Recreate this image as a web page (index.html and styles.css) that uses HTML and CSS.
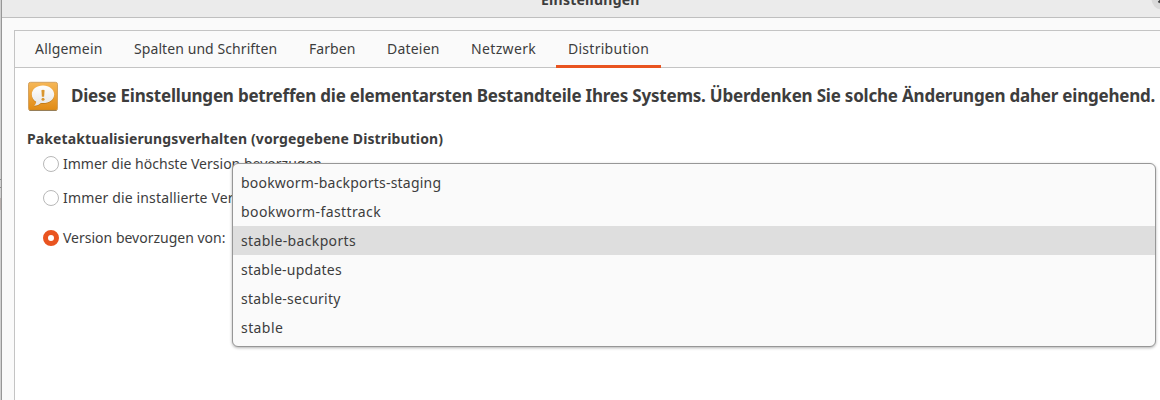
FILE: index.html
```html
<!DOCTYPE html>
<html lang="de">
<head>
<meta charset="utf-8">
<title>Einstellungen</title>
<link rel="stylesheet" href="styles.css">
</head>
<body>
<div class="desktop-edge"><i class="edge-line"></i><i class="edge-line edge-line-second"></i><i class="edge-block"></i></div>
<main class="window">
  <header class="titlebar">
    <span class="title">Einstellungen</span>
    <svg class="close" viewBox="0 0 22 22" width="22" height="22"><circle cx="11" cy="11" r="10.5" fill="#d9d9d9"/><path d="M7.500 7.500l7 7M14.500 7.500l-7 7" stroke="#3d3d3d" stroke-width="2"/></svg>
  </header>
  <section class="notebook">
    <nav class="tabs">
      <span class="tab ls-allgemein">Allgemein</span>
      <span class="tab ls-spalten">Spalten und Schriften</span>
      <span class="tab ls-farben">Farben</span>
      <span class="tab ls-dateien">Dateien</span>
      <span class="tab ls-netzwerk">Netzwerk</span>
      <span class="tab active ls-distribution">Distribution</span>
    </nav>
    <div class="page">
      <div class="warning">
        <svg class="warning-icon" viewBox="0 0 30 30" width="30" height="30">
          <defs>
            <linearGradient id="tile" x2="0" y2="1"><stop offset="0" stop-color="#f6b757"/><stop offset="1" stop-color="#e08a14"/></linearGradient>
            <linearGradient id="bubble" x2="0" y2="1"><stop offset="0" stop-color="#ffffff"/><stop offset="1" stop-color="#e6e6e6"/></linearGradient>
          </defs>
          <rect x=".5" y="1.300" width="29" height="28.2" rx="2" fill="url(#tile)" stroke="#d3a260"/>
          <path d="M1.500 29.400h27" stroke="#8f7a58"/>
          <path d="M15 5.200C8.600 5.200 3.800 9 3.800 14.200c0 3.200 1.700 5.700 4.400 7.300-.2 1.700-.9 2.900-2.200 4 3.200-.1 5.300-1.100 6.900-2.700.7.100 1.400.1 2.100.1 6.400 0 11.200-3.700 11.200-8.700S21.400 5.200 15 5.200z" fill="#8a5200" opacity=".4"/>
          <path d="M15 4.400C8.600 4.400 3.800 8.200 3.800 13.400c0 3.200 1.700 5.700 4.400 7.300-.2 1.700-.9 2.900-2.200 4 3.200-.1 5.300-1.100 6.900-2.700.7.100 1.400.1 2.100.1 6.400 0 11.200-3.700 11.200-8.700S21.400 4.400 15 4.400z" fill="url(#bubble)"/>
          <path d="M13.400 9.200q1.600-.9 3.200 0l-.5 6.500h-2.200z" fill="#d9962f"/><circle cx="15" cy="18.300" r="1.500" fill="#d9962f"/>
        </svg>
        <strong class="warning-text">Diese Einstellungen betreffen die elementarsten Bestandteile Ihres Systems. Überdenken Sie solche Änderungen daher eingehend.</strong>
      </div>
      <h2 class="heading">Paketaktualisierungsverhalten (vorgegebene Distribution)</h2>
      <div class="choices">
        <label class="choice"><span class="radio"></span><span class="ls-highest">Immer die höchste Version bevorzugen</span></label>
        <label class="choice choice-installed"><span class="radio"></span><span class="ls-installed">Immer die installierte Ver</span></label>
        <div class="choice-row">
          <label class="choice"><span class="radio checked"></span><span class="ls-prefer">Version bevorzugen von:</span></label>
        </div>
      </div>
    </div>
  </section>
</main>
<ul class="menu">
  <li class="item ls-staging">bookworm-backports-staging</li>
  <li class="item ls-fasttrack">bookworm-fasttrack</li>
  <li class="item selected ls-backports">stable-backports</li>
  <li class="item ls-updates">stable-updates</li>
  <li class="item ls-security">stable-security</li>
  <li class="item ls-stable">stable</li>
</ul>
</body>
</html>
```
FILE: styles.css
```css
* { box-sizing: border-box; }
body {
  margin: 0;
  width: 1160px;
  height: 400px;
  overflow: hidden;
  display: flex;
  position: relative;
  font: 14px/19px "Noto Sans", "Open Sans", sans-serif;
  color: #3d3d3d;
  white-space: nowrap;
  background: #fff;
}
.desktop-edge { width: 1px; flex: none; background: #d0d0d0; display: flex; flex-direction: column; }
.edge-line { height: 1px; margin-top: 179px; background: #909090; }
.edge-line-second { margin-top: 7px; }
.edge-block { height: 12px; margin-top: 10px; background: #b8b0ae; }
.window {
  flex: 1;
  min-width: 0;
  border-left: 1px solid #979797;
  background: #fafafa;
  display: flex;
  flex-direction: column;
}
.titlebar {
  height: 18px;
  flex: none;
  background: #ebebeb;
  border-bottom: 1px solid #bfbfbf;
  position: relative;
}
.title {
  position: absolute;
  left: 539px;
  top: -10px;
  font-weight: 700;
  letter-spacing: .25px;
}
.close { position: absolute; left: 1149px; top: -12px; }
.notebook {
  flex: 1;
  margin: 12px 0 0 12px;
  border: solid #c4c4c4;
  border-width: 1px 0 0 1px;
  background: #fff;
  display: flex;
  flex-direction: column;
}
.tabs {
  height: 37px;
  flex: none;
  display: flex;
  gap: 8px;
  padding-left: 8px;
  background: #fafafa;
  box-shadow: inset 0 -1px #c4c4c4;
}
.tab { padding: 0 12px; line-height: 35px; }
.tab.active { box-shadow: inset 0 -3px #e95420; }
.page { padding: 13px 0 0 12px; }
.warning { display: flex; gap: 13px; height: 30px; padding-left: 1px; }
.warning-icon { flex: none; }
.warning-text { font-size: 17px; line-height: 30px; font-weight: 700; letter-spacing: -.21px; }
.heading { margin: 18px 0 0; font-size: 14px; line-height: 19px; font-weight: 700; letter-spacing: .115px; }
.choices { padding: 6px 0 0 16px; }
.choice { display: flex; align-items: center; gap: 4px; height: 19px; }
.choice-installed { margin-top: 15px; }
.choice-row { margin-top: 21px; }
.radio {
  width: 16px;
  height: 16px;
  flex: none;
  border: 1px solid #b8b8b8;
  border-radius: 50%;
  background: #fff;
}
.radio.checked { border: 5px solid #e95420; }
.menu {
  position: absolute;
  left: 232px;
  top: 163px;
  width: 924px;
  height: 184px;
  margin: 0;
  padding: 4px 0;
  list-style: none;
  background: #fafafa;
  border: 1px solid #979797;
  border-radius: 6px;
  box-shadow: 0 1px 3px rgba(0, 0, 0, .3);
}
.item { height: 29px; line-height: 29px; padding-left: 8px; }
.selected { background: #dedede; }

.ls-allgemein { width: 91px; letter-spacing: .18px; }
.ls-spalten { width: 167px; letter-spacing: .08px; }
.ls-farben { width: 70px; letter-spacing: .05px; }
.ls-dateien { width: 76px; letter-spacing: .2px; }
.ls-netzwerk { width: 89px; letter-spacing: .35px; }
.ls-distribution { width: 105px; letter-spacing: .27px; }
.ls-highest { letter-spacing: .01px; }
.ls-installed { letter-spacing: .15px; }
.ls-prefer { letter-spacing: 0; }
.ls-staging { letter-spacing: .21px; }
.ls-fasttrack { letter-spacing: .4px; }
.ls-backports { letter-spacing: .34px; }
.ls-updates { letter-spacing: .23px; }
.ls-security { letter-spacing: .26px; }
.ls-stable { letter-spacing: .42px; }
```
